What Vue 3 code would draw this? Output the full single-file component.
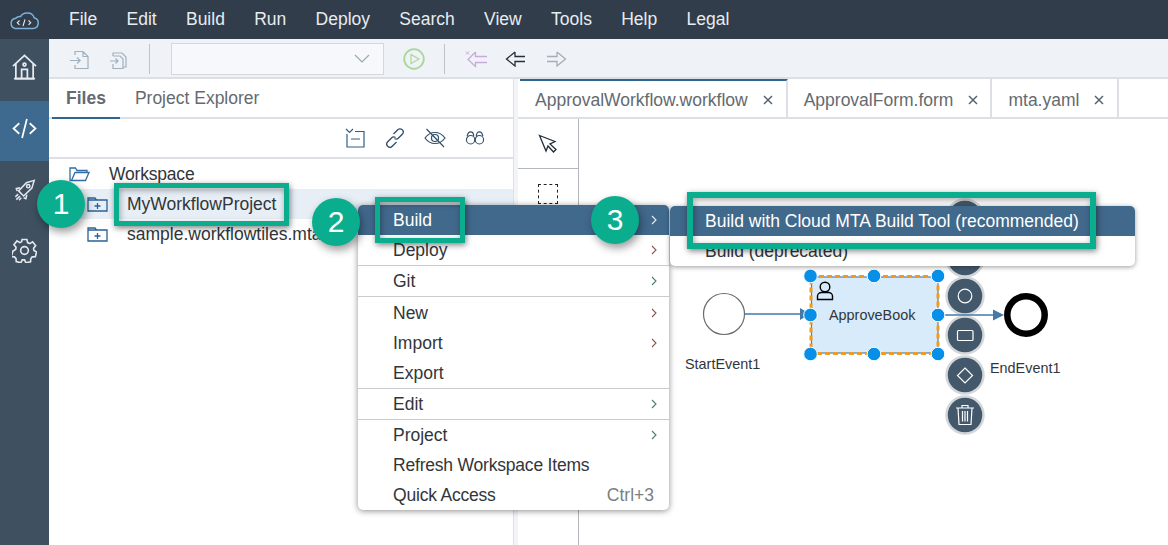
<script setup>
const menus = ['File', 'Edit', 'Build', 'Run', 'Deploy', 'Search', 'View', 'Tools', 'Help', 'Legal']
const tabs = [
  { name: 'ApprovalWorkflow.workflow', active: true },
  { name: 'ApprovalForm.form', active: false },
  { name: 'mta.yaml', active: false }
]
const groups = [
  [{ t: 'Build', arrow: 'w', hot: true }, { t: 'Deploy', arrow: 'r' }],
  [{ t: 'Git', arrow: 'g' }],
  [{ t: 'New', arrow: 'r' }, { t: 'Import', arrow: 'r' }, { t: 'Export' }],
  [{ t: 'Edit', arrow: 'g' }],
  [{ t: 'Project', arrow: 'g' }, { t: 'Refresh Workspace Items', tight: true }, { t: 'Quick Access', tight: true, key: 'Ctrl+3' }]
]
const handles = [[810.5, 276], [874, 276], [938, 276], [810.5, 315], [938, 315], [810.5, 354], [874, 354], [938, 354]]
const tools = [218, 258, 296, 335, 375, 415]
</script>

<template>
  <div class="app">
    <header class="topbar">
      <svg class="logo" width="32" height="20" viewBox="0 0 32 20" fill="none" stroke="#7db0da" stroke-width="1.500">
        <path d="M7 18.5h18a5.5 5.5 0 0 0 1.200-10.800A7 7 0 0 0 19.500 3a7.500 7.500 0 0 0-7 3.600A5 5 0 0 0 7.800 8.300 5.200 5.200 0 0 0 7 18.500z" />
        <path d="M11.500 10.500l-2.200 2.200 2.200 2.200M20.500 10.500l2.200 2.200-2.200 2.200M17 9.500l-2 6.500" stroke="#e6ecf2" stroke-width="1.100" />
      </svg>
      <nav class="menus">
        <span v-for="m in menus" :key="m">{{ m }}</span>
      </nav>
    </header>

    <div class="body">
      <aside class="rail">
        <div class="rail-item up">
          <svg width="25" height="26" viewBox="0 0 26 27" fill="none" stroke="#e8ecf0" stroke-width="1.800">
            <path d="M1 12.500 13 1.500l12 11M4 10v15.500h18V10" />
            <circle cx="13" cy="11" r="1.500" />
            <path d="M10 25.500V16h6v9.500M2 25.500h22" />
          </svg>
        </div>
        <div class="rail-item up active">
          <svg width="25" height="21" viewBox="0 0 26 22" fill="none" stroke="#fff" stroke-width="1.800">
            <path d="M7.500 5.500 1.500 11l6 5.500M18.500 5.500l6 5.500-6 5.500M15.500 1 10.500 21" />
          </svg>
        </div>
        <div class="rail-item low">
          <svg width="22" height="22" viewBox="0 0 24 24" fill="none" stroke="#e3e7ec" stroke-width="1.700">
            <path d="M22 1.500 13.500 4 5 13l5.500 5.500L19.500 10 22 1.500zM6.500 9.500 2.500 10.500l1 2.500M14 17l-1 4.500-2.500-1" />
            <circle cx="15.500" cy="7.800" r="1.800" />
            <path d="M4.500 16.500 1.500 19.500M6.500 18.500 2.500 22.500M8 20.500 5.500 23" />
          </svg>
        </div>
        <div class="rail-item low">
          <svg width="25" height="25" viewBox="0 0 26 26" fill="none" stroke="#e3e7ec" stroke-width="1.700">
            <path d="M10.500 1.500h5l.7 3.300 2.300 1 2.900-1.800 3.200 4-2.200 2.600.4 2.400 2.700 1.500-1.200 5-3.300.1-1.500 2-.2 3.100-4.900 1.100-1.300-3h-2.500l-1.400 3-4.800-1.200-.2-3.100-1.700-1.900-3.300-.1L1 13.500l2.800-1.600.4-2.400L2 7l3.200-4 2.800 1.800 2-1z" />
            <circle cx="13" cy="13" r="4" />
          </svg>
        </div>
      </aside>

      <main class="main">
        <div class="toolbar">
          <svg class="t-a" width="22" height="20" viewBox="0 0 22 20" fill="none" stroke="#9fb0bf" stroke-width="1.200">
            <path d="M6 5V1.500h8l5 5v12H6V15M14 1.500v5h5M1 10.500h10M8 7.500l3.200 3-3.200 3" />
          </svg>
          <svg class="t-b" width="20" height="20" viewBox="0 0 20 20" fill="none" stroke="#9fb0bf" stroke-width="1.200">
            <path d="M4 6V3h9l4 4v10h-3M4 6h7l3 3v9.500H4V14M1 11h8M6.500 8.500 9 11l-2.500 2.500" />
          </svg>
          <i class="vsep sep-a"></i>
          <div class="select">
            <svg width="16" height="9" viewBox="0 0 16 9" fill="none" stroke="#9aa7b4" stroke-width="1.200">
              <path d="M1 1l7 7 7-7" />
            </svg>
          </div>
          <svg class="t-play" width="22" height="22" viewBox="0 0 22 22" fill="none" stroke="#a9d79a" stroke-width="1.800">
            <circle cx="11" cy="11" r="9.800" />
            <path d="M8 6.500 16 11l-8 4.500z" stroke-width="1.200" />
          </svg>
          <i class="vsep sep-b"></i>
          <svg class="t-arrow" width="24" height="18" viewBox="0 0 24 18" fill="none" stroke="#c9aade" stroke-width="1.300">
            <path d="M10.500 2 3 9.500l7.500 7v-4H22M10.500 2v4.500H22" />
            <path d="M1 1.500l3 3M4 1.500l-3 3" stroke-width="1" />
          </svg>
          <svg class="t-arrow back" width="22" height="16" viewBox="0 0 22 16" fill="none" stroke="#25303b" stroke-width="1.300">
            <path d="M10 1 1.500 8 10 15v-4.500h10M10 1v4.500h10" />
          </svg>
          <svg class="t-arrow fwd" width="22" height="16" viewBox="0 0 22 16" fill="none" stroke="#a6adb7" stroke-width="1.300">
            <path d="M12 1l8.500 7-8.500 7v-4.500H2M12 1v4.500H2" />
          </svg>
        </div>

        <div class="panes">
          <section class="left">
            <div class="left-tabs">
              <span class="ltab on">Files</span>
              <span class="ltab">Project Explorer</span>
            </div>
            <div class="left-tools">
              <svg width="22" height="20" viewBox="0 0 22 20" fill="none" stroke="#2f5f86" stroke-width="1.200">
                <path d="M2 1l3.500 3.500L9 1M11 3.500h9v15.500H3V6M7 11h9" />
              </svg>
              <svg width="22" height="20" viewBox="-1 0 22 20" fill="none" stroke="#2f4f6b" stroke-width="1.300">
                <path d="M8.500 6 12.500 2a3 3 0 0 1 5 4l-4 4a3 3 0 0 1-4 .5M11.500 14 7.500 18a3 3 0 0 1-5-4l4-4a3 3 0 0 1 4-.5" />
              </svg>
              <svg width="22" height="20" viewBox="0 0 22 20" fill="none" stroke="#2f4f6b" stroke-width="1.200">
                <path d="M1 10s4-5.500 10-5.500S21 10 21 10s-4 5.500-10 5.500S1 10 1 10z" />
                <circle cx="11" cy="10" r="3.500" />
                <path d="M2.500 1 20 19" />
              </svg>
              <svg width="22" height="14" viewBox="0 0 22 16" fill="none" stroke="#2f4f6b" stroke-width="1.300">
                <circle cx="6" cy="10" r="4.800" />
                <circle cx="16" cy="10" r="4.800" />
                <path d="M2 6c.5-3 2-5 4-5s3.500 2 3.500 5M12.500 6c0-3 1.500-5 3.500-5s3.500 2 4 5M10 10h2" />
              </svg>
            </div>
            <ul class="tree">
              <li class="node root">
                <svg width="21" height="15" viewBox="0 0 21 15" fill="none" stroke="#2f6da4" stroke-width="1.300">
                  <path d="M2.500 13.500h14l3.500-8H18V3.500H8L6.500 1H1v12.500zM2.500 13.500 6 5.500h12" />
                </svg>
                <span class="tight">Workspace</span>
              </li>
              <li class="node hover">
                <svg width="21" height="16" viewBox="0 0 21 16" fill="none" stroke="#2a6195" stroke-width="1.300">
                  <path d="M1 2h7l1.500 2H20v11H1zM1 4h8M10.500 7v6M7.500 10h6" />
                </svg>
                <span>MyWorkflowProject</span>
              </li>
              <li class="node">
                <svg width="21" height="16" viewBox="0 0 21 16" fill="none" stroke="#2a6195" stroke-width="1.300">
                  <path d="M1 2h7l1.500 2H20v11H1zM1 4h8M10.500 7v6M7.500 10h6" />
                </svg>
                <span>sample.workflowtiles.mta</span>
              </li>
            </ul>
          </section>

          <div class="split"></div>

          <section class="right">
            <div class="rtabs">
              <div v-for="t in tabs" :key="t.name" class="rtab" :class="{ on: t.active }">
                <span>{{ t.name }}</span>
                <svg width="10" height="10" viewBox="0 0 10 10" fill="none" stroke="#56626e" stroke-width="1.500">
                  <path d="M1 1l8 8M9 1l-8 8" />
                </svg>
              </div>
            </div>
            <div class="editor">
              <div class="palette">
                <div class="pcell first">
                  <svg width="20" height="20" viewBox="0 0 20 20" fill="none" stroke="#1f2b38" stroke-width="1.300">
                    <path d="M1.500 1.500 17 7.500l-5 2.500 6 5.500-2.500 2.500-5.500-6L8 17z" />
                  </svg>
                </div>
                <div class="pcell">
                  <i class="dashed"></i>
                </div>
              </div>
              <div class="canvas">
                <svg class="flow" viewBox="579 119 589 426" fill="none">
                  <circle cx="724" cy="314" r="20.500" fill="#fff" stroke="#6b6b6b" stroke-width="1.200" />
                  <path d="M744.500 314H803" stroke="#4579a8" stroke-width="1.400" />
                  <path d="M800 308l10 6-10 6z" fill="#4579a8" />
                  <rect x="811.500" y="277" width="126.500" height="76" fill="#d7ebfb" stroke="#4f7ea9" stroke-width="1.200" />
                  <rect x="811" y="276.500" width="127" height="77" stroke="#f59a16" stroke-width="3" stroke-dasharray="5 3" />
                  <circle cx="825" cy="287" r="4.800" stroke="#000" stroke-width="1.400" />
                  <path d="M817.500 299.500v-3.500c0-2 2-3.500 4-3.500h7c2 0 4 1.500 4 3.500v3.500z" fill="#d7ebfb" stroke="#000" stroke-width="1.400" />
                  <circle v-for="(y, i) in tools" :key="i" cx="965" :cy="y" r="18.500" fill="#44586c" stroke="#d4d7da" stroke-width="2.500" />
                  <circle cx="965" cy="296" r="6.800" stroke="#fff" stroke-width="1.200" />
                  <rect x="957.500" y="330.500" width="15.500" height="10" rx="1" stroke="#fff" stroke-width="1.200" />
                  <path d="M965 368l7.500 7.500-7.500 7.500-7.500-7.500z" stroke="#fff" stroke-width="1.200" />
                  <path d="M956 408h18M962 408v-2.500h6v2.500M958 408l1 16.500h12l1-16.500M962.500 411v10.500M965 411v10.500M967.500 411v10.500" stroke="#fff" stroke-width="1.200" />
                  <path d="M938 315h56" stroke="#4579a8" stroke-width="1.400" />
                  <path d="M993 309.500l11 5.500-11 5.500z" fill="#4579a8" />
                  <circle cx="1026" cy="315" r="18.700" fill="#fff" stroke="#000" stroke-width="6.500" />
                  <circle v-for="(h, i) in handles" :key="'h' + i" :cx="h[0]" :cy="h[1]" r="6.800" fill="#0890e8" stroke="#fff" stroke-width="1" />
                </svg>
                <span class="lbl start">StartEvent1</span>
                <span class="lbl task">ApproveBook</span>
                <span class="lbl end">EndEvent1</span>
              </div>
            </div>
          </section>
        </div>
      </main>
    </div>

    <div class="ctx">
      <div v-for="(g, gi) in groups" :key="gi" class="ctx-group">
        <div v-for="item in g" :key="item.t" class="ctx-row" :class="{ hot: item.hot }">
          <span :class="{ tight: item.tight }">{{ item.t }}</span>
          <span v-if="item.key" class="key">{{ item.key }}</span>
          <svg v-if="item.arrow" width="6" height="10" viewBox="0 0 6 10" fill="none" :class="'arrow-' + item.arrow" stroke-width="1.100">
            <path d="M1 1l4 4-4 4" />
          </svg>
        </div>
      </div>
    </div>

    <div class="sub">
      <div class="sub-row hot">Build with Cloud MTA Build Tool (recommended)</div>
      <div class="sub-row">Build (deprecated)</div>
    </div>

    <div class="mark m1"></div>
    <div class="mark m2"></div>
    <div class="mark m3"></div>
    <div class="badge b1">1</div>
    <div class="badge b2">2</div>
    <div class="badge b3">3</div>
  </div>
</template>

<style>
html, body { margin: 0; background: #fff; overflow: hidden; }
</style>

<style scoped>
.app {
  position: relative;
  width: 1168px;
  height: 545px;
  overflow: hidden;
  display: flex;
  flex-direction: column;
  font-family: "Liberation Sans", Arial, sans-serif;
  font-size: 17.500px;
  color: #32363a;
}
.tight { letter-spacing: -.2px; }
.topbar {
  height: 39px;
  flex: none;
  background: #313d4a;
  display: flex;
  align-items: center;
}
.logo { margin-left: 8px; }
.menus {
  display: flex;
  gap: 29.300px;
  margin-left: 29px;
  color: #e7ecf1;
}
.body { flex: 1; display: flex; min-height: 0; }
.rail {
  width: 49px;
  flex: none;
  background: #3f5061;
  display: flex;
  flex-direction: column;
}
.rail-item {
  height: 60px;
  box-sizing: border-box;
  display: flex;
  align-items: center;
  justify-content: center;
}
.rail-item:first-child { height: 62px; }
.rail-item.up { padding-bottom: 6px; }
.rail-item.low { padding-bottom: 2px; }
.rail-item.active { background: #3f6a8f; }
.main { flex: 1; display: flex; flex-direction: column; min-width: 0; }
.toolbar {
  height: 40px;
  flex: none;
  box-sizing: border-box;
  border-bottom: 2px solid #dcdfe3;
  padding-top: 1px;
  background: #eff2f7;
  display: flex;
  align-items: center;
}
.t-a { margin-left: 20px; margin-top: 2px; }
.t-b { margin-left: 18px; margin-top: 2px; }
.vsep { width: 1px; height: 30px; background: #bcc3ca; display: block; }
.sep-a { margin-left: 20px; }
.select {
  margin-left: 21px;
  width: 213px;
  height: 32px;
  box-sizing: border-box;
  border: 1px solid #d4d8dd;
  background: #f6f8fb;
  display: flex;
  align-items: center;
  justify-content: flex-end;
  padding-right: 13px;
}
.t-play { margin-left: 19px; }
.sep-b { margin-left: 19px; }
.t-arrow { margin-left: 20px; }
.t-arrow.back { margin-left: 16px; }
.t-arrow.fwd { margin-left: 18px; }

.panes { flex: 1; display: flex; min-height: 0; }
.left { width: 464px; flex: none; background: #fff; }
.left-tabs {
  height: 40px;
  box-sizing: border-box;
  border-bottom: 2px solid #dcdfe3;
  padding-left: 3px;
  display: flex;
}
.ltab {
  padding: 0 13px 0 15px;
  line-height: 38px;
  height: 40px;
  box-sizing: border-box;
  color: #646a70;
}
.ltab.on {
  font-weight: 700;
  padding: 0 14px;
  border-bottom: 2px solid #2f6690;
}
.left-tools {
  height: 40px;
  box-sizing: border-box;
  border-bottom: 2px solid #dcdfe3;
  display: flex;
  align-items: center;
  justify-content: flex-end;
  gap: 18px;
  padding-right: 27px;
}
.tree { list-style: none; margin: 0; padding: 0; }
.node {
  height: 30px;
  display: flex;
  align-items: center;
  padding-left: 38px;
  gap: 19px;
}
.node.root { padding-left: 20px; }
.node.hover { background: #e7eef6; }
.split { width: 5px; flex: none; background: #f2f4f8; border-left: 1px solid #dde0e4; box-sizing: border-box; }
.right { flex: 1; min-width: 0; display: flex; flex-direction: column; }
.rtabs {
  height: 40px;
  flex: none;
  box-sizing: border-box;
  border-bottom: 2px solid #dcdfe3;
  padding-left: 2px;
  display: flex;
}
.rtab {
  box-sizing: border-box;
  height: 38px;
  border-right: 2px solid #dcdfe3;
  padding: 4px 12px 0 16px;
  display: flex;
  align-items: center;
  gap: 15px;
  color: #646a70;
}
.rtab:last-child { padding-right: 13px; }
.rtab.on { border-top: 2px solid #2f6690; padding: 2px 13px 0 15px; }
.editor { flex: 1; display: flex; min-height: 0; }
.palette {
  width: 61px;
  flex: none;
  box-sizing: border-box;
  border-right: 1px solid #b4b8bc;
}
.pcell { display: flex; justify-content: center; padding-top: 15px; height: 50px; box-sizing: border-box; }
.pcell.first { border-bottom: 1px solid #b4b8bc; }
.dashed { width: 20px; height: 20px; box-sizing: border-box; border: 1px dashed #222; display: block; }
.canvas { position: relative; flex: 1; min-width: 0; }
.flow { position: absolute; left: 0; top: 0; width: 589px; height: 426px; }
.lbl { position: absolute; font-size: 14.400px; line-height: 16px; color: #32363a; }
.lbl.start { left: 106px; top: 237px; }
.lbl.task { left: 250px; top: 188px; }
.lbl.end { left: 411px; top: 241px; }

.ctx {
  position: absolute;
  left: 358px;
  top: 205px;
  width: 311px;
  background: #fff;
  border-radius: 5px;
  box-shadow: 0 1px 6px rgba(0, 0, 0, .45);
  overflow: hidden;
}
.ctx-group + .ctx-group { border-top: 1px solid #c9cbce; }
.ctx-group:nth-child(3) { padding-top: 1px; }
.ctx-row {
  height: 30px;
  display: flex;
  align-items: center;
  padding: 0 12px 0 35px;
  justify-content: space-between;
  color: #32363a;
}
.ctx-row.hot { background: #41698c; color: #fff; }
.key { color: #7a7f85; margin-right: 3px; }
.arrow-w { stroke: #e6edf3; }
.arrow-r { stroke: #8a5a50; }
.arrow-g { stroke: #4f7f66; }
.sub {
  position: absolute;
  left: 670px;
  top: 206px;
  width: 465px;
  background: #fff;
  border-radius: 5px;
  box-shadow: 0 1px 5px rgba(0, 0, 0, .4);
  overflow: hidden;
}
.sub-row { height: 30px; line-height: 30px; padding-left: 35px; }
.sub-row.hot { background: #41698c; color: #fff; }

.mark {
  position: absolute;
  box-sizing: border-box;
  border: 5px solid #0aae8e;
  box-shadow: 1px 2px 6px rgba(0, 0, 0, .5), inset 1px 2px 6px rgba(0, 0, 0, .35);
}
.m1 { left: 114px; top: 183px; width: 175px; height: 43px; }
.m2 { left: 375px; top: 197px; width: 90px; height: 46px; }
.m3 { left: 687px; top: 192px; width: 409px; height: 57px; border-width: 6px; }
.badge {
  position: absolute;
  width: 48px;
  height: 48px;
  border-radius: 50%;
  background: #0aae8e;
  color: #fff;
  font-size: 30px;
  line-height: 48px;
  text-align: center;
  box-shadow: 2px 4px 8px rgba(0, 0, 0, .4);
}
.b1 { left: 37px; top: 180px; }
.b2 { left: 312px; top: 198px; }
.b3 { left: 591px; top: 196px; }
</style>
